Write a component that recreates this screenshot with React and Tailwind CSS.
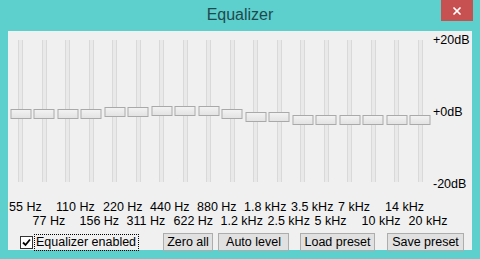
import { X } from 'lucide-react';

const BANDS = [
  { label: '55 Hz',   top: 109 },
  { label: '77 Hz',   top: 109 },
  { label: '110 Hz',  top: 109 },
  { label: '156 Hz',  top: 109 },
  { label: '220 Hz',  top: 107 },
  { label: '311 Hz',  top: 107 },
  { label: '440 Hz',  top: 106 },
  { label: '622 Hz',  top: 106 },
  { label: '880 Hz',  top: 106 },
  { label: '1.2 kHz', top: 109 },
  { label: '1.8 kHz', top: 112 },
  { label: '2.5 kHz', top: 112 },
  { label: '3.5 kHz', top: 115 },
  { label: '5 kHz',   top: 115 },
  { label: '7 kHz',   top: 115 },
  { label: '10 kHz',  top: 115 },
  { label: '14 kHz',  top: 115 },
  { label: '20 kHz',  top: 115 },
];

const TRACK_TOP = 40;

function Slider({ top }) {
  return (
    <div className="relative h-[142px] flex justify-center">
      <div className="w-[5px] h-full border-x border-[#d9d9d9] bg-[#e9e9e9]" />
      <div
        className="absolute left-1/2 -translate-x-1/2 w-[21px] h-[10px] border border-[#a9a9a9] bg-gradient-to-b from-[#f2f2f2] to-[#e3e3e3]"
        style={{ top: top - TRACK_TOP }}
      />
    </div>
  );
}

function Button({ children, className = '' }) {
  return (
    <button className={`h-[18px] border border-[#adadad] bg-[#e1e1e1] text-[12.5px] leading-none text-black flex items-center justify-center ${className}`}>
      {children}
    </button>
  );
}

export default function App() {
  return (
    <div
      className="w-[480px] h-[259px] bg-[#5dcfcd] flex flex-col overflow-hidden"
      style={{ fontFamily: '"Liberation Sans", Arial, sans-serif' }}
    >
      {/* title bar */}
      <div className="relative h-[31px] flex items-center justify-center shrink-0">
        <span className="text-[16px] text-[#1f4a4d] -mt-[1px]">Equalizer</span>
        <div className="absolute right-[7px] top-0 w-[32px] h-[21px] bg-[#c75050] flex items-center justify-center">
          <X size={12} strokeWidth={3.5} className="text-white" />
        </div>
      </div>

      {/* client area */}
      <div className="mx-[8px] h-[219px] bg-[#f0f0f0] text-[12.5px] leading-[14px] text-black">
        <div className="flex pl-[1px]">
          <div className="grid grid-cols-[repeat(18,23.5px)] mt-[9px]">
            {BANDS.map((b) => (
              <Slider key={b.label} top={b.top} />
            ))}
          </div>
          <div className="ml-[1px] mt-[2px] h-[158px] flex flex-col justify-between whitespace-nowrap">
            <span>+20dB</span>
            <span>+0dB</span>
            <span>-20dB</span>
          </div>
        </div>

        <div className="pl-[1px] mt-[9px]">
          <div className="grid grid-cols-[repeat(18,23.5px)] h-[14px] whitespace-nowrap">
            {BANDS.map((b, i) => (
              <span key={b.label}>{i % 2 === 0 ? b.label : ''}</span>
            ))}
          </div>
          <div className="grid grid-cols-[repeat(18,23.5px)] h-[14px] whitespace-nowrap">
            {BANDS.map((b, i) => (
              <span key={b.label}>{i % 2 === 1 ? b.label : ''}</span>
            ))}
          </div>
        </div>

        <div className="flex items-center mt-[5px] pl-[12px]">
          <div className="w-[13px] h-[13px] border border-[#333] bg-white flex items-center justify-center mt-[1px]">
            <svg width="9" height="9" viewBox="0 0 9 9">
              <path d="M1 4.5 L3.5 7 L8 1.5" fill="none" stroke="#000" strokeWidth="1.8" />
            </svg>
          </div>
          <span className="ml-[1px] h-[17px] px-[1px] border border-dotted border-black flex items-center w-[105px] whitespace-nowrap">
            Equalizer enabled
          </span>
          <Button className="ml-[24px] w-[50px]">Zero all</Button>
          <Button className="ml-[5px] w-[71px]">Auto level</Button>
          <Button className="ml-[11px] w-[75px]">Load preset</Button>
          <Button className="ml-[12px] w-[77px]">Save preset</Button>
        </div>
      </div>
    </div>
  );
}
